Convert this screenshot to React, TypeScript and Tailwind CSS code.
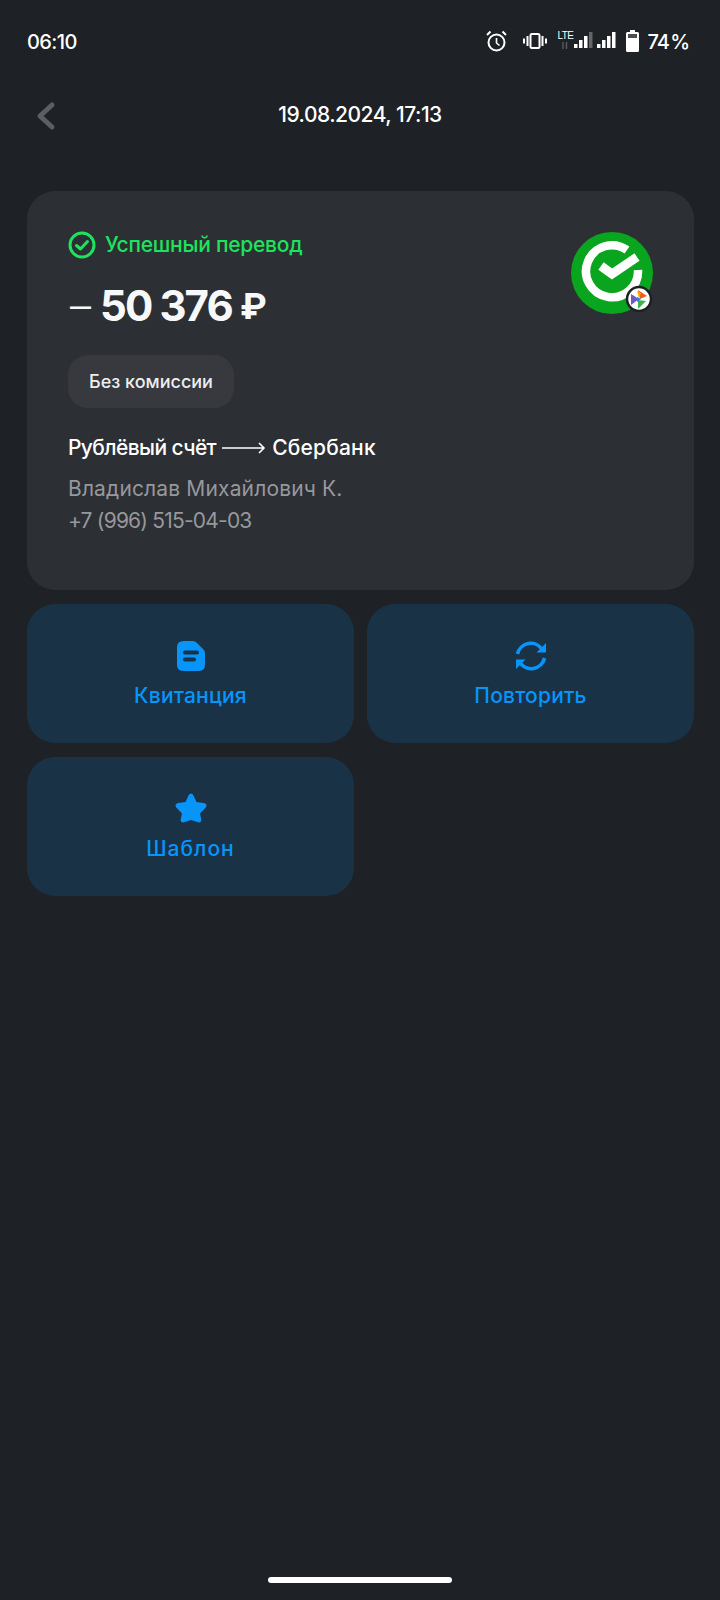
import React from "react";

const font = { fontFamily: '"Inter","Noto Sans",sans-serif' };

function StatusIcons() {
  return (
    <div className="flex items-start h-[24px]">
      <svg width="21" height="22" viewBox="0 0 21 22" fill="none" stroke="#fff" className="mr-[16px]">
        <circle cx="10.5" cy="12.5" r="8" strokeWidth="2" />
        <path d="M10.5 8V13L13.5 15.5" strokeWidth="1.6" />
        <path d="M1 5L4.5 1.5M20 5L16.5 1.5" strokeWidth="2" />
      </svg>
      <svg width="24" height="18" viewBox="0 0 24 18" fill="none" stroke="#fff" className="mr-[10px] mt-[3px]">
        <rect x="7.5" y="1" width="9" height="14" rx="1.5" strokeWidth="2" />
        <path d="M4.5 3V13M19.5 3V13" strokeWidth="2" />
        <path d="M1 5.5V10.5M23 5.5V10.5" strokeWidth="2" />
      </svg>
      <div className="flex flex-col w-[15px] mr-[2px] mt-[1px]">
        <span className="text-[10px] leading-[10px] text-white tracking-[-0.5px] font-[Liberation_Sans]">LTE</span>
        <svg width="15" height="8" viewBox="0 0 15 8" className="mt-[1px]">
          <path d="M6 0v7M9.5 0v7" stroke="#5a5c5f" strokeWidth="1.4" />
        </svg>
      </div>
      <svg width="19" height="18" viewBox="0 0 19 18" className="mr-[4px] mt-[2px]">
        <rect x="0" y="12" width="3.5" height="4" fill="#fff" />
        <rect x="5" y="8" width="3.5" height="8" fill="#fff" />
        <rect x="10" y="4" width="3.5" height="12" fill="#fff" />
        <rect x="15" y="0" width="3.5" height="16" fill="#636568" />
      </svg>
      <svg width="19" height="18" viewBox="0 0 19 18" className="mr-[10px] mt-[2px]">
        <rect x="0" y="12" width="3.5" height="4" fill="#fff" />
        <rect x="5" y="8" width="3.5" height="8" fill="#fff" />
        <rect x="10" y="4" width="3.5" height="12" fill="#fff" />
        <rect x="15" y="0" width="3.5" height="16" fill="#fff" />
      </svg>
      <svg width="13" height="22" viewBox="0 0 13 22" className="mr-[8px]">
        <path d="M4 0H9V2H11.5Q13 2 13 3.5V20.5Q13 22 11.5 22H1.5Q0 22 0 20.5V3.5Q0 2 1.5 2H4Z" fill="#fff" />
        <rect x="2" y="4" width="9" height="4" fill="#4a4d52" />
      </svg>
      <span className="text-[20px] font-medium text-white leading-[24px] tracking-[-1px] [word-spacing:-3px]">74 %</span>
    </div>
  );
}

function Logo() {
  return (
    <svg width="82" height="82" viewBox="0 0 82 82" className="shrink-0 mt-[1px]">
      <circle cx="41" cy="41" r="41" fill="#0aa51f" />
      <path d="M56 18A26 26 0 1 0 67 38" fill="none" stroke="#fff" strokeWidth="8.5" />
      <path d="M30 34L41 42L66 25" fill="none" stroke="#fff" strokeWidth="9" />
      <circle cx="68" cy="67" r="12" fill="#fff" stroke="#1d2024" strokeWidth="2.5" />
      <path d="M67 58L76 64L69 67Z" fill="#ef5a1f" />
      <path d="M60 62L68 67L60 73Z" fill="#6d58c6" />
      <path d="M67 68L75 69L67 77Z" fill="#37b44a" />
      <path d="M66 59L70 61L68 66Z" fill="#f5a800" />
      <path d="M66 65L70 67L66 70Z" fill="#1f86e0" />
    </svg>
  );
}

function ActionButton({ label, track, children }: { label: string; track: string; children: React.ReactNode }) {
  return (
    <div className="h-[139px] rounded-[28px] bg-[#193246] flex flex-col items-center pt-[36px]">
      <div className="h-[32px] flex items-start">{children}</div>
      <span className={`mt-[10px] text-[21px] leading-[28px] font-medium text-[#0795fa] ${track}`}>{label}</span>
    </div>
  );
}

export default function App() {
  return (
    <div style={font} className="w-[720px] h-[1600px] bg-[#1e2125] flex flex-col overflow-hidden">
      <div className="h-[85px] pt-[30px] pl-[27px] pr-[31px] flex justify-between items-start">
        <span className="text-[20px] leading-[24px] font-medium text-white tracking-[-0.6px]">06:10</span>
        <StatusIcons />
      </div>
      <div className="h-[60px] grid grid-cols-[1fr_auto_1fr] items-center">
        <svg width="24" height="32" viewBox="0 0 24 32" fill="none" className="ml-[33px] mt-[2px]">
          <path d="M19 5L7 16L19 27" stroke="#5c5e61" strokeWidth="5" strokeLinecap="round" strokeLinejoin="round" />
        </svg>
        <span className="text-[21px] font-medium text-white tracking-[-0.5px]">19.08.2024, 17:13</span>
      </div>
      <div className="pl-[27px] pr-[26px] pt-[46px] flex flex-col gap-[14px]">
        <div className="h-[399px] rounded-[28px] bg-[#2c2f34] px-[41px] pt-[40px]">
          <div className="flex justify-between items-start">
            <div>
              <div className="flex items-center h-[28px]">
                <svg width="28" height="28" viewBox="0 0 28 28" fill="none" stroke="#1de35d">
                  <circle cx="14" cy="14" r="12" strokeWidth="3" />
                  <path d="M8.5 14.5L12.5 18L19.5 10.5" strokeWidth="3" strokeLinecap="round" strokeLinejoin="round" />
                </svg>
                <span className="ml-[9px] text-[21px] font-medium text-[#1de35d] leading-[28px] tracking-[-0.25px]">Успешный перевод</span>
              </div>
              <div className="mt-[21px] h-[52px] flex items-center text-[#f7f8fa] leading-none">
                <span className="text-[42px] font-light ml-[2px] mr-[9px]">–</span>
                <span className="text-[42px] font-bold tracking-[-1.9px]">50 376</span>
                <span className="text-[36px] font-bold ml-[8px]">₽</span>
              </div>
            </div>
            <Logo />
          </div>
          <div className="mt-[23px] w-[166px] h-[53px] rounded-[20px] bg-[#38393e] flex items-center justify-center text-[18px] font-medium text-[#eceef0]">
            Без комиссии
          </div>
          <div className="mt-[27px] flex items-center text-[21px] leading-[26px] font-medium text-white">
            <span className="tracking-[-0.6px]">Рублёвый счёт</span>
            <svg width="44" height="14" viewBox="0 0 44 14" fill="none" stroke="#fff" strokeWidth="1.6" className="mx-[6px]">
              <path d="M0 7H42M37 2L42 7L37 12" />
            </svg>
            <span className="tracking-[0.2px]">Сбербанк</span>
          </div>
          <div className="mt-[12px] text-[21px] leading-[32px] text-[#97989c] tracking-[0.15px]">Владислав Михайлович К.</div>
          <div className="text-[21px] leading-[32px] text-[#97989c] tracking-[-0.8px]">+7 (996) 515-04-03</div>
        </div>
        <div className="grid grid-cols-2 gap-x-[13px] gap-y-[14px]">
          <ActionButton label="Квитанция" track="tracking-[0.2px]">
            <svg width="28" height="32" viewBox="0 0 28 32">
              <path fillRule="evenodd" fill="#0795fa" d="M7 1H16Q18 1 20 3L26 9Q28 11 28 13V25Q28 31 21 31H7Q0 31 0 25V7Q0 1 7 1ZM8 10.5Q6 10.5 6 12.5T8 14.5H20Q22 14.5 22 12.5T20 10.5ZM8 17.5Q6 17.5 6 19.5T8 21.5H17Q19 21.5 19 19.5T17 17.5Z" />
            </svg>
          </ActionButton>
          <ActionButton label="Повторить" track="tracking-[0.2px]">
            <svg width="32" height="32" viewBox="0 0 32 32" fill="none">
              <path d="M2.5 14A13.5 13.5 0 0 1 27 9.5M29.5 18A13.5 13.5 0 0 1 5 22.5" stroke="#0795fa" strokeWidth="3.6" />
              <path d="M31 3V12.5L21.5 12.5ZM1 29V19.5L10.5 19.5Z" fill="#0795fa" />
            </svg>
          </ActionButton>
          <ActionButton label="Шаблон" track="tracking-[1px]">
            <svg width="32" height="30" viewBox="0 0 32 30">
              <path fill="#0795fa" d="M16 0.5Q17.5 0.5 18.5 2.5L21.5 9L28.5 10Q31.5 10.5 31.5 12.5Q31.5 14 30 15.3L25 20.5L26.3 26.5Q26.5 29.5 24 29.5L16 27L8 29.5Q5.5 29.5 5.7 26.5L7 20.5L2 15.3Q0.5 14 0.5 12.5Q0.5 10.5 3.5 10L10.5 9L13.5 2.5Q14.5 0.5 16 0.5Z" />
            </svg>
          </ActionButton>
        </div>
      </div>
      <div className="mt-auto mb-[17px] mx-auto w-[184px] h-[6px] rounded-full bg-white" />
    </div>
  );
}
